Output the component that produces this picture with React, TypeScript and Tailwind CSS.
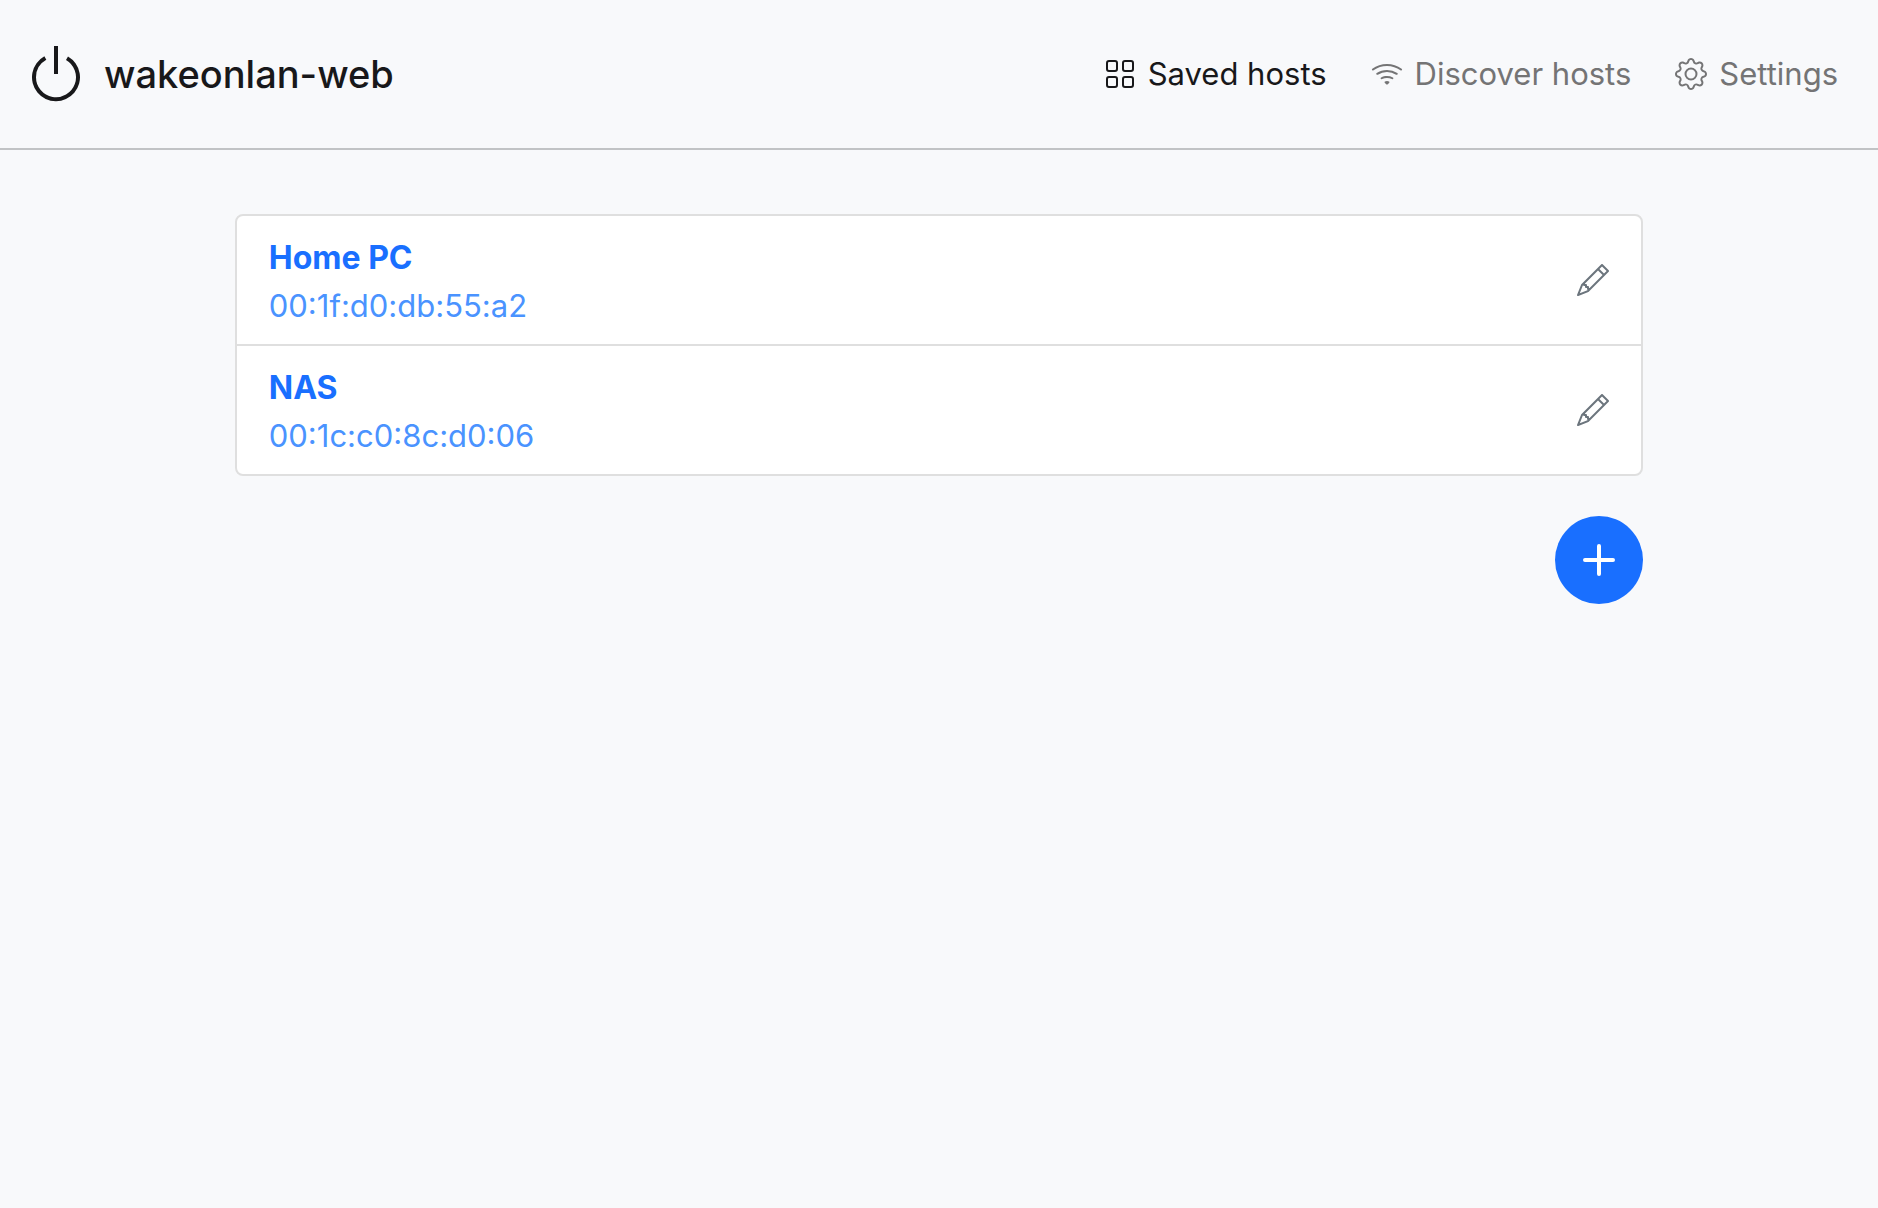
import React from 'react';
import { BsGear, BsGrid, BsPencil, BsPlus, BsPower, BsWifi } from 'react-icons/bs';

const hosts = [
  { name: 'Home PC', mac: '00:1f:d0:db:55:a2' },
  { name: 'NAS', mac: '00:1c:c0:8c:d0:06' },
];

const App: React.FC = () => {
  return (
    <div className="min-h-screen bg-[#f8f9fb] font-[Inter,sans-serif] text-[#212529]">
      {/* Navbar */}
      <header className="flex items-center justify-between border-b-2 border-[#c1c3c5] py-[42px] pl-6 pr-10">
        <a href="#" className="flex items-center gap-4 text-[38px] font-medium text-[#18181a]">
          <BsPower className="size-16" aria-hidden="true" />
          wakeonlan-web
        </a>
        <nav className="flex items-center gap-11 text-[31px] text-[#747475]">
          <a href="#hosts" className="flex items-center gap-3 text-[#18181a]">
            <BsGrid className="size-8" aria-hidden="true" />
            Saved hosts
          </a>
          <a href="#discover" className="flex items-center gap-3">
            <BsWifi className="size-8" aria-hidden="true" />
            Discover hosts
          </a>
          <a href="#settings" className="flex items-center gap-3">
            <BsGear className="size-8" aria-hidden="true" />
            Settings
          </a>
        </nav>
      </header>

      {/* Hosts */}
      <main className="mx-auto w-3/4 pt-16">
        <ul className="divide-y-2 divide-[#dfdfdf] rounded-lg border-2 border-[#dfdfdf] bg-white">
          {hosts.map((host) => (
            <li key={host.mac} className="flex items-center">
              <button type="button" className="grow pt-[18px] pb-[14px] pl-8 text-left leading-[48px]">
                <div className="text-[32px] font-bold text-[#196fff]">{host.name}</div>
                <div className="text-[31px] text-[#4a93ff]">{host.mac}</div>
              </button>
              <button type="button" aria-label={`Edit ${host.name}`} className="px-8 text-[#6c757d]">
                <BsPencil className="size-8" aria-hidden="true" />
              </button>
            </li>
          ))}
        </ul>
        <div className="mt-10 flex justify-end">
          <button
            type="button"
            aria-label="Add host"
            className="flex size-22 items-center justify-center rounded-full bg-[#196fff] text-white"
          >
            <BsPlus className="size-16" aria-hidden="true" />
          </button>
        </div>
      </main>
    </div>
  );
};

export default App;
